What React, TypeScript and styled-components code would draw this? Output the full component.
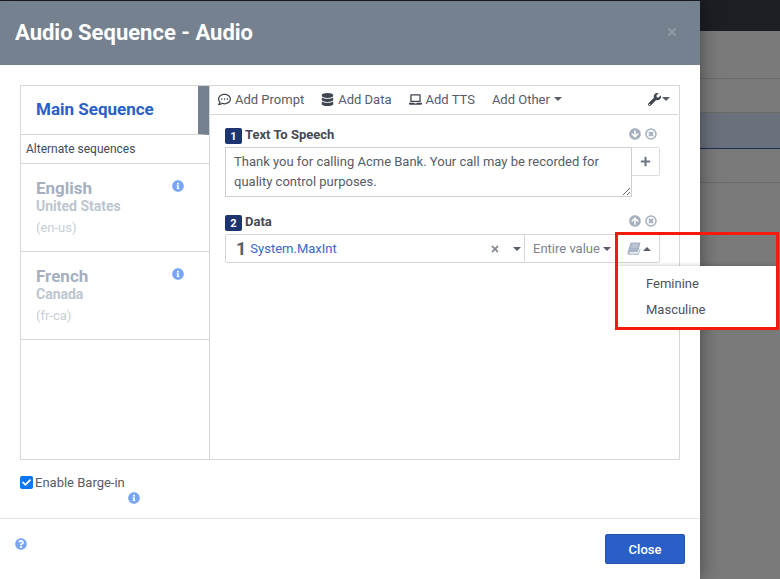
import React from 'react';
import styled, { createGlobalStyle } from 'styled-components';
import {
  FaArrowCircleDown,
  FaArrowCircleUp,
  FaCheck,
  FaDatabase,
  FaInfoCircle,
  FaLaptop,
  FaPlus,
  FaQuestionCircle,
  FaRegCommentDots,
  FaTimes,
  FaWrench,
} from 'react-icons/fa';

const GlobalStyle = createGlobalStyle`
  * { box-sizing: border-box; }
  html, body { margin: 0; height: 100%; overflow: hidden; }
  body { font-family: Roboto, "Liberation Sans", sans-serif; color: #444a55; font-size: 13px; }
`;

const Page = styled.div`
  position: relative;
  width: 780px;
  height: 579px;
  overflow: hidden;
  background: #7a7a7a;
`;

const Backdrop = styled.div`
  display: flex;
  flex-direction: column;
  height: 100%;
`;

const BackdropBar = styled.div`
  height: 31px;
  background: #1c1e23;
`;

const BackdropRow = styled.div<{ $h: number; $active?: boolean }>`
  height: ${p => p.$h}px;
  background: ${p => (p.$active ? '#6b717c' : '#7a7a7a')};
  border-bottom: 1px solid ${p => (p.$active ? '#1b2c55' : '#6a6a6a')};
`;

const Modal = styled.div`
  position: absolute;
  left: 0;
  top: 1px;
  width: 700px;
  height: 578px;
  background: #fff;
  display: flex;
  flex-direction: column;
  box-shadow: 0 0 18px rgba(0, 0, 0, 0.45);
`;

const Header = styled.div`
  height: 64px;
  flex: none;
  background: #75818e;
  display: flex;
  align-items: center;
  justify-content: space-between;
  padding: 0 22px 2px 15px;
`;

const Title = styled.h1`
  margin: 0;
  font-size: 22px;
  font-weight: 700;
  color: #fff;
`;

const Dismiss = styled.span`
  color: #8f99a4;
  font-size: 12px;
  display: flex;
`;

const Body = styled.div`
  flex: 1;
  padding: 20px 20px 0;
  display: flex;
  flex-direction: column;
`;

const Panel = styled.div`
  height: 375px;
  flex: none;
  border: 1px solid #d6d6d6;
  display: flex;
`;

const Sidebar = styled.div`
  width: 189px;
  flex: none;
  border-right: 1px solid #d6d6d6;
  display: flex;
  flex-direction: column;
`;

const MainTab = styled.div`
  height: 49px;
  padding: 0 0 2px 15px;
  display: flex;
  align-items: center;
  font-size: 17px;
  font-weight: 700;
  color: #2a5fc7;
  border-bottom: 1px solid #d6d6d6;
  border-right: 11px solid #75818e;
`;

const AltLabel = styled.div`
  height: 29px;
  padding: 0 0 0 5px;
  display: flex;
  align-items: center;
  font-size: 12px;
  color: #444a55;
  border-bottom: 1px solid #d6d6d6;
`;

const Lang = styled.div`
  height: 88px;
  padding: 16px 25px 0 15px;
  border-bottom: 1px solid #d6d6d6;
  display: flex;
  justify-content: space-between;
  align-items: flex-start;
`;

const LangName = styled.div`
  font-size: 17px;
  line-height: 17px;
  font-weight: 700;
  color: #a5b0bf;
`;

const LangRegion = styled.div`
  font-size: 14px;
  line-height: 18px;
  font-weight: 700;
  color: #bcc5d0;
`;

const LangCode = styled.div`
  font-size: 13px;
  line-height: 16px;
  margin-top: 5px;
  color: #c6ced8;
`;

const InfoIcon = styled(FaInfoCircle)`
  color: #78a6f5;
  font-size: 12px;
`;

const Editor = styled.div`
  flex: 1;
  min-width: 0;
`;

const Toolbar = styled.div`
  height: 29px;
  margin-right: 1px;
  border-bottom: 1px solid #d6d6d6;
  padding: 0 8px 2px 8px;
  display: flex;
  align-items: center;
`;

const ToolButton = styled.span`
  display: flex;
  align-items: center;
  gap: 4px;
  margin-right: 17px;
  font-size: 13px;
  color: #565c68;
  svg { color: #3f4650; font-size: 13px; }
`;

const Caret = styled.i<{ $up?: boolean }>`
  display: inline-block;
  width: 0;
  height: 0;
  border-left: 4px solid transparent;
  border-right: 4px solid transparent;
  border-${p => (p.$up ? 'bottom' : 'top')}: 4px solid #565c68;
`;

const ToolEnd = styled.span`
  margin-left: auto;
  display: flex;
  align-items: center;
  gap: 1px;
  svg { color: #3f4650; font-size: 13px; }
`;

const Block = styled.section<{ $top: number }>`
  margin: ${p => p.$top}px 19px 0 15px;
`;

const BlockHead = styled.div`
  height: 16px;
  display: flex;
  align-items: flex-start;
  gap: 3px;
  font-size: 13px;
  line-height: 13px;
  font-weight: 700;
  color: #444a55;
`;

const Badge = styled.span`
  width: 17px;
  height: 16px;
  border-radius: 2px;
  background: #1c3570;
  color: #fff;
  font-size: 11px;
  font-weight: 700;
  display: flex;
  align-items: center;
  justify-content: center;
`;

const HeadIcons = styled.span`
  margin-left: auto;
  margin-right: 3px;
  display: flex;
  gap: 4px;
  color: #a5b0bf;
  font-size: 12px;
`;

const InputRow = styled.div`
  display: flex;
  margin-top: 3px;
`;

const SpeechText = styled.textarea`
  width: 407px;
  height: 50px;
  padding: 4px 8px;
  border: 1px solid #cfcfcf;
  border-radius: 0;
  outline: none;
  font-family: inherit;
  font-size: 13px;
  line-height: 20px;
  color: #565c68;
  background: #fff;
`;

const AddBox = styled.span`
  width: 28px;
  height: 29px;
  border: 1px solid #dcdcdc;
  border-left: none;
  border-radius: 0 2px 2px 0;
  display: flex;
  align-items: center;
  justify-content: center;
  color: #6d7886;
  font-size: 11px;
`;

const DataRow = styled.div`
  display: flex;
  width: 435px;
  height: 29px;
  margin-top: 3px;
  border: 1px solid #d6d6d6;
  border-radius: 2px;
`;

const DataValue = styled.div`
  width: 299px;
  padding: 0 0 0 10px;
  display: flex;
  align-items: center;
  border-right: 1px solid #d6d6d6;
`;

const DataIndex = styled.span`
  font-size: 18px;
  font-weight: 700;
  color: #565c68;
  margin-right: 4px;
`;

const DataName = styled.span`
  font-size: 13px;
  color: #3a67c9;
`;

const DataClear = styled.span`
  margin-left: auto;
  margin-right: 13px;
  display: flex;
  color: #858b94;
  font-size: 10px;
`;

const DataCaret = styled.span`
  display: flex;
  margin-right: 3px;
`;

const ScopeSelect = styled.div`
  width: 92px;
  padding: 0 0 0 8px;
  display: flex;
  align-items: center;
  gap: 3px;
  font-size: 13px;
  color: #7b8390;
`;

const BookButton = styled.div`
  flex: 1;
  display: flex;
  align-items: center;
  gap: 2px;
  padding-left: 9px;
  border-left: 1px solid #e3e3e3;
`;

const Highlight = styled.div`
  position: absolute;
  left: 615px;
  top: 232px;
  width: 164px;
  height: 98px;
  border: 3px solid #f51a0c;
  pointer-events: none;
`;

const Menu = styled.div`
  position: absolute;
  left: 618px;
  top: 266px;
  width: 158px;
  height: 61px;
  background: #fff;
  box-shadow: 0 0 5px rgba(0, 0, 0, 0.25);
  padding-top: 4px;
`;

const MenuItem = styled.div`
  height: 26px;
  padding-left: 28px;
  display: flex;
  align-items: center;
  font-size: 13px;
  color: #4c525e;
`;

const BargeIn = styled.label`
  margin-top: 14px;
  display: flex;
  align-items: center;
  gap: 2px;
  height: 16px;
  font-size: 13px;
  color: #565c68;
`;

const CheckBox = styled.span`
  width: 13px;
  height: 13px;
  border-radius: 2px;
  background: #0f76f2;
  color: #fff;
  display: flex;
  align-items: center;
  justify-content: center;
  font-size: 9px;
`;

const BargeInfo = styled.div`
  height: 12px;
  padding-left: 108px;
  margin-top: 2px;
  display: flex;
  svg { color: #78a6f5; font-size: 12px; }
`;

const Footer = styled.div`
  margin-top: auto;
  height: 61px;
  flex: none;
  border-top: 1px solid #e3e3e3;
  padding: 15px 15px 0;
  display: flex;
  justify-content: space-between;
  align-items: flex-start;
`;

const Help = styled(FaQuestionCircle)`
  color: #78a6f5;
  font-size: 12px;
  margin-top: 4px;
`;

const CloseButton = styled.button`
  width: 80px;
  height: 30px;
  border: 1px solid #2655ad;
  border-radius: 2px;
  background: #2a5fc7;
  color: #fff;
  font-family: inherit;
  font-size: 13px;
  font-weight: 500;
`;

// ring with a heavy x, the package's outlined version is too thin at this size
const RemoveIcon = () => (
  <svg width="12" height="12" viewBox="0 0 12 12" fill="none" stroke="#a5b0bf">
    <circle cx="6" cy="6" r="5" strokeWidth="1.5" />
    <path d="M4 4l4 4M8 4l-4 4" strokeWidth="2" />
  </svg>
);

// slanted book, the package's one stands upright
const BookIcon = () => (
  <svg width="14" height="13" viewBox="0 0 14 13">
    <path d="M3.5 0.5H13.5L11 10.2H3C2 10.2 1.8 11.4 3 11.4H11.4L12.8 6.5L13.6 7L11.8 12.8H2.2C0.8 12.8 0.2 11.6 0.6 10.2Z" fill="#a8b5c8" />
    <path d="M5 3H11M4.5 5H10.5" stroke="#d5dce6" strokeWidth="0.8" />
  </svg>
);

export default function App() {
  return (
    <Page>
      <GlobalStyle />
      <Backdrop>
        <BackdropBar />
        <BackdropRow $h={48} />
        <BackdropRow $h={34} />
        <BackdropRow $h={36} $active />
        <BackdropRow $h={34} />
      </Backdrop>
      <Modal>
        <Header>
          <Title>Audio Sequence - Audio</Title>
          <Dismiss><FaTimes /></Dismiss>
        </Header>
        <Body>
          <Panel>
            <Sidebar>
              <MainTab>Main Sequence</MainTab>
              <AltLabel>Alternate sequences</AltLabel>
              <Lang>
                <div>
                  <LangName>English</LangName>
                  <LangRegion>United States</LangRegion>
                  <LangCode>(en-us)</LangCode>
                </div>
                <InfoIcon />
              </Lang>
              <Lang>
                <div>
                  <LangName>French</LangName>
                  <LangRegion>Canada</LangRegion>
                  <LangCode>(fr-ca)</LangCode>
                </div>
                <InfoIcon />
              </Lang>
            </Sidebar>
            <Editor>
              <Toolbar>
                <ToolButton><FaRegCommentDots />Add Prompt</ToolButton>
                <ToolButton><FaDatabase />Add Data</ToolButton>
                <ToolButton><FaLaptop />Add TTS</ToolButton>
                <ToolButton>Add Other <Caret /></ToolButton>
                <ToolEnd><FaWrench /><Caret /></ToolEnd>
              </Toolbar>
              <Block $top={13}>
                <BlockHead>
                  <Badge>1</Badge>
                  Text To Speech
                  <HeadIcons><FaArrowCircleDown /><RemoveIcon /></HeadIcons>
                </BlockHead>
                <InputRow>
                  <SpeechText
                    readOnly
                    value="Thank you for calling Acme Bank. Your call may be recorded for quality control purposes."
                  />
                  <AddBox><FaPlus /></AddBox>
                </InputRow>
              </Block>
              <Block $top={18}>
                <BlockHead>
                  <Badge>2</Badge>
                  Data
                  <HeadIcons><FaArrowCircleUp /><RemoveIcon /></HeadIcons>
                </BlockHead>
                <DataRow>
                  <DataValue>
                    <DataIndex>1</DataIndex>
                    <DataName>System.MaxInt</DataName>
                    <DataClear><FaTimes /></DataClear>
                    <DataCaret><Caret /></DataCaret>
                  </DataValue>
                  <ScopeSelect>Entire value <Caret /></ScopeSelect>
                  <BookButton><BookIcon /><Caret $up /></BookButton>
                </DataRow>
              </Block>
            </Editor>
          </Panel>
          <BargeIn>
            <CheckBox><FaCheck /></CheckBox>
            Enable Barge-in
          </BargeIn>
          <BargeInfo><FaInfoCircle /></BargeInfo>
        </Body>
        <Footer>
          <Help />
          <CloseButton>Close</CloseButton>
        </Footer>
      </Modal>
      <Menu>
        <MenuItem>Feminine</MenuItem>
        <MenuItem>Masculine</MenuItem>
      </Menu>
      <Highlight />
    </Page>
  );
}
